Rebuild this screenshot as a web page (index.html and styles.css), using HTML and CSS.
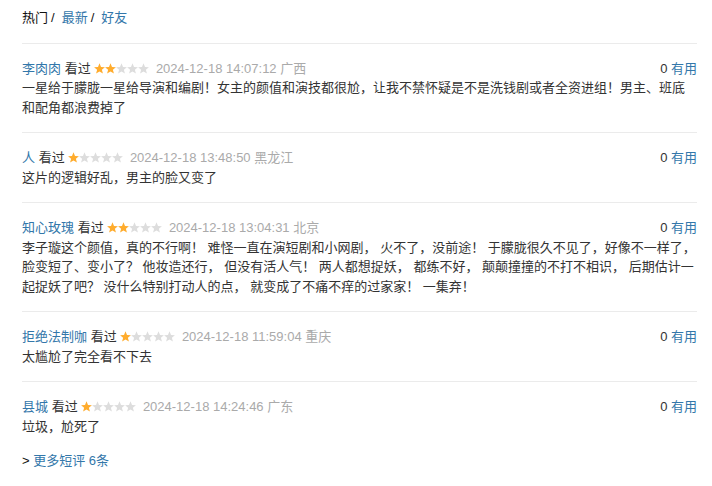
FILE: index.html
```html
<!DOCTYPE html>
<html lang="zh-CN">
<head>
<meta charset="utf-8">
<title>短评</title>
<link rel="stylesheet" href="styles.css">
</head>
<body>
<div class="wrap">
  <div class="tabs"><span class="cur">热门</span><span class="sep">/</span><a href="#">最新</a><span class="sep">/</span><a href="#">好友</a></div>

  <div class="item">
    <div class="hd">
      <div class="info"><a href="#">李肉肉</a> 看过 <span class="stars s2"></span> <span class="time">2024-12-18 14:07:12</span> <span class="loc">广西</span></div>
      <div class="vote"><span class="num">0</span> <a href="#">有用</a></div>
    </div>
    <p class="txt">一星给于朦胧一星给导演和编剧！女主的颜值和演技都很尬，让我不禁怀疑是不是洗钱剧或者全资进组！男主、班底和配角都浪费掉了</p>
  </div>

  <div class="item">
    <div class="hd">
      <div class="info"><a href="#">人</a> 看过 <span class="stars s1"></span> <span class="time">2024-12-18 13:48:50</span> <span class="loc">黑龙江</span></div>
      <div class="vote"><span class="num">0</span> <a href="#">有用</a></div>
    </div>
    <p class="txt">这片的逻辑好乱，男主的脸又变了</p>
  </div>

  <div class="item">
    <div class="hd">
      <div class="info"><a href="#">知心玫瑰</a> 看过 <span class="stars s2"></span> <span class="time">2024-12-18 13:04:31</span> <span class="loc">北京</span></div>
      <div class="vote"><span class="num">0</span> <a href="#">有用</a></div>
    </div>
    <p class="txt">李子璇这个颜值，真的不行啊！ 难怪一直在演短剧和小网剧， 火不了，没前途！ 于朦胧很久不见了，好像不一样了，脸变短了、变小了？ 他妆造还行， 但没有活人气！ 两人都想捉妖， 都练不好， 颠颠撞撞的不打不相识， 后期估计一起捉妖了吧？ 没什么特别打动人的点， 就变成了不痛不痒的过家家！ 一集弃！</p>
  </div>

  <div class="item">
    <div class="hd">
      <div class="info"><a href="#">拒绝法制咖</a> 看过 <span class="stars s1"></span> <span class="time">2024-12-18 11:59:04</span> <span class="loc">重庆</span></div>
      <div class="vote"><span class="num">0</span> <a href="#">有用</a></div>
    </div>
    <p class="txt">太尴尬了完全看不下去</p>
  </div>

  <div class="item">
    <div class="hd">
      <div class="info"><a href="#">县城</a> 看过 <span class="stars s1"></span> <span class="time">2024-12-18 14:24:46</span> <span class="loc">广东</span></div>
      <div class="vote"><span class="num">0</span> <a href="#">有用</a></div>
    </div>
    <p class="txt">垃圾，尬死了</p>
  </div>

  <p class="more">&gt; <a href="#">更多短评 6条</a></p>
</div>
</body>
</html>
```

FILE: styles.css
```css
html, body {
  margin: 0;
  padding: 0;
  background: #fff;
}
body {
  font: 13px/19.5px "Liberation Sans", Arial, "Noto Sans CJK SC", sans-serif;
  color: #333;
}
a {
  color: #3377aa;
  text-decoration: none;
}
.wrap {
  width: 675px;
  padding: 8px 0 0 22px;
}
.tabs {
  color: #111;
  margin-bottom: 15px;
}
.sep {
  margin: 0 7px 0 3px;
}
.item {
  border-top: 1px solid #ebebeb;
  padding: 15px 0 15px;
}
.hd {
  display: flex;
  justify-content: space-between;
}
.stars {
  display: inline-block;
  width: 55px;
  height: 11px;
  vertical-align: -1px;
  margin-right: 3px;
  background-repeat: no-repeat;
}
.s1 {
  background-image: url("data:image/svg+xml;utf8,<svg xmlns='http://www.w3.org/2000/svg' width='55' height='11' viewBox='0 0 55 11'><defs><path id='s' d='M5.5 0.3L7 4L10.9 4.2L7.9 6.8L8.9 10.6L5.5 8.5L2.1 10.6L3.1 6.8L0.1 4.2L4 4Z'/></defs><use href='%23s' fill='%23ffac2d'/><use href='%23s' x='11' fill='%23dddddd'/><use href='%23s' x='22' fill='%23dddddd'/><use href='%23s' x='33' fill='%23dddddd'/><use href='%23s' x='44' fill='%23dddddd'/></svg>");
}
.s2 {
  background-image: url("data:image/svg+xml;utf8,<svg xmlns='http://www.w3.org/2000/svg' width='55' height='11' viewBox='0 0 55 11'><defs><path id='s' d='M5.5 0.3L7 4L10.9 4.2L7.9 6.8L8.9 10.6L5.5 8.5L2.1 10.6L3.1 6.8L0.1 4.2L4 4Z'/></defs><use href='%23s' fill='%23ffac2d'/><use href='%23s' x='11' fill='%23ffac2d'/><use href='%23s' x='22' fill='%23dddddd'/><use href='%23s' x='33' fill='%23dddddd'/><use href='%23s' x='44' fill='%23dddddd'/></svg>");
}
.time, .loc {
  color: #aaa;
}
.vote .num {
  color: #333;
}
.txt {
  margin: 0;
  color: #333;
}
.more {
  margin: 0;
  color: #111;
}
```
